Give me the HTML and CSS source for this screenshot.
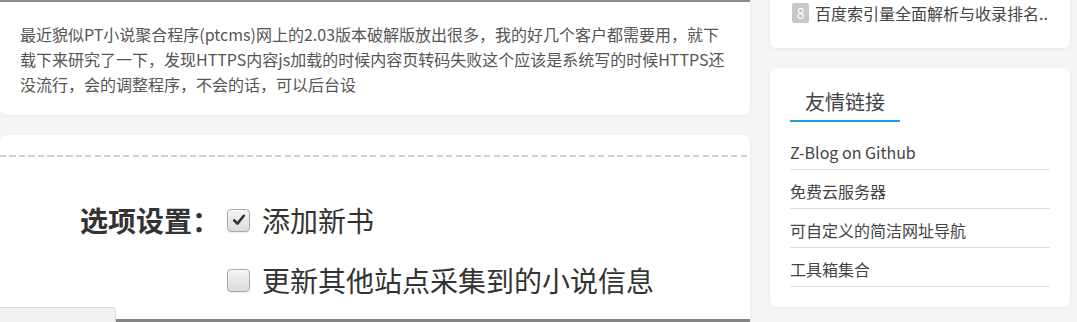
FILE: index.html
```html
<!DOCTYPE html>
<html lang="zh-CN">
<head>
<meta charset="utf-8">
<title>PTcms</title>
<link rel="stylesheet" href="styles.css">
</head>
<body>
<div class="page">
  <main class="main">
    <article class="card post">
      <div class="imgbar"></div>
      <p class="text">最近貌似PT小说聚合程序(ptcms)网上的2.03版本破解版放出很多，我的好几个客户都需要用，就下载下来研究了一下，发现HTTPS内容js加载的时候内容页转码失败这个应该是系统写的时候HTTPS还没流行，会的调整程序，不会的话，可以后台设</p>
    </article>
    <article class="card shot">
      <div class="dashes"></div>
      <div class="form">
        <div class="label">选项设置：</div>
        <span class="check on"><svg viewBox="0 0 14 14" width="14" height="14"><path d="M2.2 7.4 L5.4 10.6 L11.8 2.8" fill="none" stroke="#333" stroke-width="2.6" stroke-linecap="round" stroke-linejoin="round"/></svg></span>
        <span class="opt">添加新书</span>
        <div></div>
        <span class="check"></span>
        <span class="opt">更新其他站点采集到的小说信息</span>
      </div>
      <div class="strip">
        <div class="tab"></div>
        <div class="bar"></div>
      </div>
    </article>
  </main>
  <aside class="side">
    <section class="card hot">
      <div class="hot-item"><span class="badge">8</span><span class="hot-title">百度索引量全面解析与收录排名..</span></div>
    </section>
    <section class="card links">
      <h3 class="title">友情链接</h3>
      <ul class="link-list">
        <li>Z-Blog on Github</li>
        <li>免费云服务器</li>
        <li>可自定义的简洁网址导航</li>
        <li>工具箱集合</li>
      </ul>
    </section>
  </aside>
</div>
</body>
</html>
```

FILE: styles.css
```css
* { box-sizing: border-box; }
html, body { margin: 0; padding: 0; }
body {
  background: #f5f5f5;
  font-family: "Microsoft YaHei", "Noto Sans CJK SC", sans-serif;
  color: #555;
  overflow: hidden;
}
.page {
  display: flex;
  gap: 20px;
  width: 1070px;
  align-items: flex-start;
}
.main {
  width: 750px;
  display: flex;
  flex-direction: column;
  gap: 20px;
}
.side {
  width: 300px;
  display: flex;
  flex-direction: column;
  gap: 20px;
}
.card {
  background: #fff;
  border-radius: 6px;
  box-shadow: 0 1px 3px rgba(0, 0, 0, 0.06);
}
.post {
  padding: 0 20px 18px;
  border-radius: 0 0 6px 6px;
}
.imgbar {
  height: 2px;
  background: #8a8a8a;
  margin: 0 -20px 20px;
}
.text {
  margin: 0;
  font-size: 16px;
  line-height: 25px;
  color: #555;
}
.shot {
  height: 200px;
  padding-top: 20px;
  border-radius: 6px 6px 0 0;
  overflow: hidden;
}
.dashes {
  height: 2px;
  background: repeating-linear-gradient(to right, #d2d2d2 0 6px, transparent 6px 9.5px);
}
.form {
  display: grid;
  grid-template-columns: 220px 23px auto;
  column-gap: 7px;
  row-gap: 20px;
  margin-top: 43px;
  align-items: center;
  color: #333;
}
.form .opt { margin-left: 5px; font-size: 28px; line-height: 40px; }
.label {
  padding-left: 80px;
  font-size: 28px;
  font-weight: 700;
  line-height: 40px;
  color: #333;
}
.check {
  width: 23px;
  height: 23px;
  border: 1px solid #a8a8a8;
  border-radius: 4px;
  background: linear-gradient(#f4f4f4, #dcdcdc);
  box-shadow: inset 0 1px 1px rgba(255,255,255,0.8), 0 1px 1px rgba(0,0,0,0.08);
  display: flex;
  align-items: center;
  justify-content: center;
}
.strip {
  display: flex;
  align-items: flex-end;
  height: 15px;
  margin-top: 7px;
}
.tab {
  width: 116px;
  height: 15px;
  background: #f1f1f1;
  border-top: 1px solid #dadada;
  border-right: 1px solid #dadada;
  border-radius: 0 4px 0 0;
}
.bar {
  flex: 1;
  height: 3px;
  background: #858585;
}
.hot {
  margin-top: -20px;
  padding: 23px 22px 25px;
}
.hot-item {
  display: flex;
  align-items: center;
  height: 20px;
}
.badge {
  width: 20px;
  height: 20px;
  border-radius: 2px;
  background: #c8c8c8;
  color: #fff;
  font-size: 14px;
  line-height: 20px;
  text-align: center;
  margin-right: 6px;
}
.hot-title {
  font-size: 16px;
  color: #444;
  white-space: nowrap;
}
.links {
  padding: 20px 20px 20px;
}
.title {
  display: inline-block;
  margin: 0;
  padding: 0 15px 4px;
  font-size: 20px;
  font-weight: 400;
  line-height: 28px;
  color: #444;
  border-bottom: 2px solid #1e9fe6;
}
.link-list {
  list-style: none;
  margin: 9px 0 0;
  padding: 0;
}
.link-list li {
  padding: 10px 0 6px;
  font-size: 16px;
  line-height: 22px;
  color: #444;
  border-bottom: 1px solid #dedede;
}
```
